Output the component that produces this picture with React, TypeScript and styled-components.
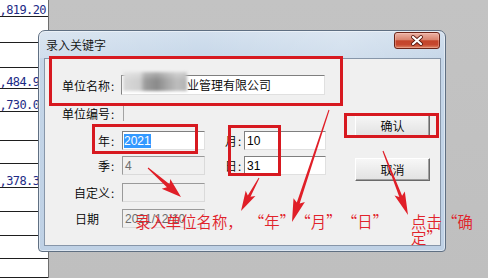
import React from 'react';
import styled, { createGlobalStyle } from 'styled-components';

const CJK = `"Noto Sans CJK SC DemiLight", "Noto Sans CJK SC", sans-serif`;

const GlobalStyle = createGlobalStyle`
  html, body { margin: 0; padding: 0; }
  body {
    background: #c0c0c0;
    overflow: hidden;
    font-family: ${CJK};
  }
`;

const Desktop = styled.div`
  position: relative;
  width: 488px;
  height: 278px;
  display: flex;
  background: #c0c0c0;
  overflow: hidden;
`;

const Sheet = styled.div`
  width: 48px;
  flex-shrink: 0;
  background: #ffffff;
  border-right: 1px solid #6e6e6e;
  display: flex;
  flex-direction: column;
  overflow: hidden;
`;

const SheetRow = styled.div<{ $h: number }>`
  height: ${(p) => p.$h}px;
  box-sizing: border-box;
  flex-shrink: 0;
  border-bottom: 1px solid #1e1e1e;
  display: flex;
  align-items: flex-end;
  justify-content: flex-end;
  padding-right: 2px;
  font-family: "DejaVu Sans Mono", "Liberation Mono", monospace;
  font-size: 12px;
  letter-spacing: -0.6px;
  line-height: 12px;
  color: #1d2b86;
  white-space: nowrap;
`;

const Backdrop = styled.div`
  flex: 1;
  background: linear-gradient(180deg, #c3c3c3 0%, #bfbfbf 100%);
`;

const Window = styled.div`
  position: absolute;
  left: 38px;
  top: 30px;
  width: 408px;
  height: 222px;
  box-sizing: border-box;
  border: 1px solid #5f6f82;
  border-radius: 7px 7px 4px 4px;
  background: linear-gradient(180deg, #d3e0ee 0%, #c5d6e8 14%, #bfd1e5 100%);
  display: flex;
  flex-direction: column;
  box-shadow: inset 0 0 0 1px rgba(255, 255, 255, 0.45);
`;

const TitleBar = styled.div`
  height: 27px;
  flex-shrink: 0;
  display: flex;
  align-items: center;
  padding: 0 5px 0 7px;
  background: linear-gradient(90deg, rgba(255,255,255,0.18) 0%, rgba(255,255,255,0) 40%, rgba(255,255,255,0.2) 75%, rgba(255,255,255,0) 100%);
  border-radius: 6px 6px 0 0;
`;

const Title = styled.span`
  font-size: 12px;
  line-height: 14px;
  color: #111;
`;

const CloseButton = styled.div`
  margin-left: auto;
  align-self: flex-start;
  margin-top: 1px;
  width: 46px;
  height: 17px;
  box-sizing: border-box;
  border: 1px solid #6b2418;
  border-radius: 3px;
  background: linear-gradient(180deg, #ecb3a5 0%, #d9846f 45%, #c4442a 52%, #c6482f 78%, #df8767 100%);
  display: flex;
  align-items: center;
  justify-content: center;
  box-shadow: inset 0 0 0 1px rgba(255, 210, 200, 0.35);
`;

const Frame = styled.div`
  flex: 1;
  display: flex;
  padding: 0 4px 5px 5px;
`;

const Client = styled.div`
  flex: 1;
  box-sizing: border-box;
  border: 1px solid #8796a9;
  background: #f0f0f0;
  padding-top: 16px;
  display: flex;
  flex-direction: column;
`;

const NameRow = styled.div`
  display: flex;
  align-items: center;
  height: 20px;
`;

const Body = styled.div`
  display: flex;
  margin-top: 9px;
`;

const Fields = styled.div`
  display: flex;
  flex-direction: column;
  width: 281px;
`;

const Row = styled.div<{ $mt: number }>`
  display: flex;
  align-items: center;
  height: 19px;
  margin-top: ${(p) => p.$mt}px;
`;

const Label = styled.div<{ $w?: number; $pr?: number }>`
  width: ${(p) => p.$w ?? 71}px;
  flex-shrink: 0;
  box-sizing: border-box;
  padding-right: ${(p) => p.$pr ?? 0}px;
  text-align: right;
  font-size: 12px;
  line-height: 19px;
  color: #000;
  white-space: nowrap;
`;

const Colon = styled.span`
  display: inline-block;
  width: 6px;
  box-sizing: border-box;
  padding-left: 1px;
  text-align: left;
`;

const Field = styled.div<{ $w?: number; $h?: number; $ml?: number; $off?: boolean }>`
  width: ${(p) => p.$w ?? 83}px;
  height: ${(p) => p.$h ?? 19}px;
  margin-left: ${(p) => p.$ml ?? 6}px;
  flex-shrink: 0;
  box-sizing: border-box;
  border: 1px solid;
  border-color: ${(p) => (p.$off ? '#9a9a9a #dadada #dadada #9a9a9a' : '#7f7f7f #e0e0e0 #e0e0e0 #7f7f7f')};
  background: ${(p) => (p.$off ? '#f0f0f0' : '#ffffff')};
  color: ${(p) => (p.$off ? '#6d6d6d' : '#000')};
  display: flex;
  align-items: center;
  padding-left: 2px;
  font-family: "Liberation Sans", ${CJK};
  font-size: 12px;
  line-height: 14px;
  white-space: nowrap;
`;

const BareField = styled.div`
  width: 83px;
  height: 15px;
  margin-left: 7px;
  box-sizing: border-box;
  border-left: 1px solid #a3a3a3;
`;

const Mosaic = styled.span`
  display: inline-block;
  align-self: flex-start;
  margin-top: -4px;
  margin-left: -1px;
  width: 64px;
  height: 19px;
  flex-shrink: 0;
  background:
    linear-gradient(180deg, rgba(255,255,255,0.35) 0%, rgba(255,255,255,0) 45%),
    linear-gradient(90deg, #d8d8d8 0px, #cecece 17px, #9c9c9c 22px, #8a8a8a 34px, #a6a6a6 44px, #bdbdbd 54px, #b3b3b3 64px);
  filter: blur(1.6px);
`;

const CjkText = styled.span`
  font-family: ${CJK};
  font-size: 12px;
  color: #000;
`;

const Selected = styled.span`
  background: #3399ff;
  color: #fff;
  line-height: 14px;
  margin-left: -1px;
`;

const Buttons = styled.div`
  display: flex;
  flex-direction: column;
  gap: 21px;
  margin-left: 29px;
  padding-top: 10px;
`;

const Button = styled.div`
  width: 75px;
  height: 23px;
  box-sizing: border-box;
  border: 1px solid;
  border-color: #ffffff #6a6a6a #6a6a6a #ffffff;
  box-shadow: inset -1px -1px 0 #a0a0a0;
  background: linear-gradient(180deg, #f7f7f7 0%, #ebebeb 55%, #e2e2e2 100%);
  display: flex;
  align-items: center;
  justify-content: center;
  font-size: 12px;
  line-height: 14px;
  color: #000;
`;

const RedBox = styled.div<{ $x: number; $y: number; $w: number; $h: number }>`
  position: absolute;
  left: ${(p) => p.$x}px;
  top: ${(p) => p.$y}px;
  width: ${(p) => p.$w}px;
  height: ${(p) => p.$h}px;
  box-sizing: border-box;
  border: 3px solid #d71920;
  pointer-events: none;
`;

const Caption = styled.div<{ $x: number; $y: number }>`
  position: absolute;
  left: ${(p) => p.$x}px;
  top: ${(p) => p.$y}px;
  font-family: ${CJK};
  font-size: 15.4px;
  line-height: 16px;
  color: #e1232b;
  white-space: nowrap;
`;

const CaptionLine = styled.div`
  display: flex;
`;

const Ch = styled.span<{ $align?: 'left' | 'right' | 'center'; $w?: number }>`
  display: inline-block;
  width: ${(p) => p.$w ?? 15.4}px;
  text-align: ${(p) => p.$align ?? 'center'};
`;

const Gap = styled.span<{ $w: number }>`
  display: inline-block;
  width: ${(p) => p.$w}px;
`;

const Overlay = styled.svg`
  position: absolute;
  left: 0;
  top: 0;
  width: 488px;
  height: 278px;
  pointer-events: none;
`;

type Arrow = { x1: number; y1: number; x2: number; y2: number; tail: number; neck: number; head: number; len: number };

function arrowPoints(a: Arrow): string {
  const dx = a.x2 - a.x1;
  const dy = a.y2 - a.y1;
  const L = Math.hypot(dx, dy);
  const ux = dx / L;
  const uy = dy / L;
  const nx = -uy;
  const ny = ux;
  const bx = a.x2 - ux * a.len;
  const by = a.y2 - uy * a.len;
  const back = 3;
  const pts = [
    [a.x1 + (nx * a.tail) / 2, a.y1 + (ny * a.tail) / 2],
    [bx + (nx * a.neck) / 2, by + (ny * a.neck) / 2],
    [bx - ux * back + (nx * a.head) / 2, by - uy * back + (ny * a.head) / 2],
    [a.x2, a.y2],
    [bx - ux * back - (nx * a.head) / 2, by - uy * back - (ny * a.head) / 2],
    [bx - (nx * a.neck) / 2, by - (ny * a.neck) / 2],
    [a.x1 - (nx * a.tail) / 2, a.y1 - (ny * a.tail) / 2],
  ];
  return pts.map((p) => p.map((v) => v.toFixed(1)).join(',')).join(' ');
}

const arrows: Arrow[] = [
  { x1: 148, y1: 168, x2: 181, y2: 197, tail: 1, neck: 4, head: 13, len: 17 },
  { x1: 329, y1: 110, x2: 292, y2: 222, tail: 1, neck: 3, head: 12, len: 20 },
  { x1: 259, y1: 178, x2: 241, y2: 211, tail: 1, neck: 3, head: 11, len: 17 },
  { x1: 383, y1: 151, x2: 408, y2: 215, tail: 1, neck: 3, head: 11, len: 20 },
];

const sheetRows: { h: number; v?: string }[] = [
  { h: 17, v: '11,819.20' },
  { h: 26 },
  { h: 25 },
  { h: 21, v: '12,484.90' },
  { h: 23, v: '5,730.00' },
  { h: 29 },
  { h: 23 },
  { h: 24, v: '3,378.30' },
  { h: 24 },
  { h: 24 },
  { h: 23 },
  { h: 19 },
];

const quoted = ['年', '月', '日'];

export default function App() {
  return (
    <>
      <GlobalStyle />
      <Desktop>
        <Sheet>
          {sheetRows.map((r, i) => (
            <SheetRow key={i} $h={r.h}>
              {r.v}
            </SheetRow>
          ))}
        </Sheet>
        <Backdrop />

        <Window>
          <TitleBar>
            <Title>录入关键字</Title>
            <CloseButton>
              <svg width="14" height="11" viewBox="0 0 14 11">
                <path d="M3 2 L11 9 M11 2 L3 9" stroke="#5a1a10" strokeWidth="3.8" strokeLinecap="round" />
                <path d="M3 2 L11 9 M11 2 L3 9" stroke="#ffffff" strokeWidth="2.2" strokeLinecap="round" />
              </svg>
            </CloseButton>
          </TitleBar>
          <Frame>
            <Client>
              <NameRow>
                <Label>
                  单位名称<Colon>:</Colon>
                </Label>
                <Field $w={204} $h={20} $ml={5}>
                  <Mosaic />
                  <CjkText>业管理有限公司</CjkText>
                </Field>
              </NameRow>
              <Body>
                <Fields>
                  <Row $mt={0}>
                    <Label>
                      单位编号<Colon>:</Colon>
                    </Label>
                    <BareField />
                  </Row>
                  <Row $mt={8}>
                    <Label>
                      年<Colon>:</Colon>
                    </Label>
                    <Field>
                      <Selected>2021</Selected>
                    </Field>
                    <Label $w={38}>
                      月<Colon>:</Colon>
                    </Label>
                    <Field $w={82} $ml={1}>
                      10
                    </Field>
                  </Row>
                  <Row $mt={6}>
                    <Label>
                      季<Colon>:</Colon>
                    </Label>
                    <Field $off>4</Field>
                    <Label $w={38}>
                      日<Colon>:</Colon>
                    </Label>
                    <Field $w={82} $ml={1}>
                      31
                    </Field>
                  </Row>
                  <Row $mt={8}>
                    <Label>
                      自定义<Colon>:</Colon>
                    </Label>
                    <Field $off />
                  </Row>
                  <Row $mt={7}>
                    <Label $pr={17}>日期</Label>
                    <Field $off>2021/12/10</Field>
                  </Row>
                </Fields>
                <Buttons>
                  <Button>确认</Button>
                  <Button>取消</Button>
                </Buttons>
              </Body>
            </Client>
          </Frame>
        </Window>

        <RedBox $x={49} $y={56} $w={294} $h={50} />
        <RedBox $x={92} $y={124} $w={106} $h={30} />
        <RedBox $x={228} $y={125} $w={53} $h={51} />
        <RedBox $x={344} $y={113} $w={95} $h={25} />

        <Overlay viewBox="0 0 488 278">
          {arrows.map((a, i) => (
            <polygon key={i} points={arrowPoints(a)} fill="#e01f28" />
          ))}
        </Overlay>

        <Caption $x={135} $y={213}>
          <CaptionLine>
            <span>录入单位名称</span>
            <Ch $align="left">，</Ch>
            <Gap $w={6} />
            {quoted.map((c) => (
              <React.Fragment key={c}>
                <Ch $align="right" $w={15.5}>“</Ch>
                <Ch $w={15.5}>{c}</Ch>
                <Ch $align="left" $w={15.5}>”</Ch>
              </React.Fragment>
            ))}
          </CaptionLine>
        </Caption>
        <Caption $x={411} $y={213}>
          <CaptionLine>
            <Ch $w={15.5}>点</Ch>
            <Ch $w={15.5}>击</Ch>
            <Ch $align="right" $w={15.5}>“</Ch>
            <Ch $w={15.5}>确</Ch>
          </CaptionLine>
          <CaptionLine>
            <Ch $w={15.5}>定</Ch>
            <Ch $align="left" $w={15.5}>”</Ch>
          </CaptionLine>
        </Caption>
      </Desktop>
    </>
  );
}
